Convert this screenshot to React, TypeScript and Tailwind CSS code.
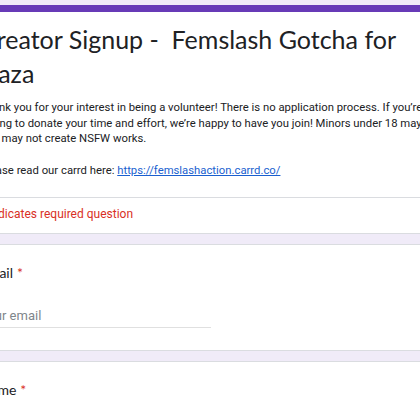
import React from "react";

const Required = () => <span className="ml-1 text-[#d93025]">*</span>;

const QuestionCard = ({ title, placeholder }: { title: string; placeholder?: string }) => (
  <div className="border border-[#dadce0] bg-white px-[24px] pt-[18px] pb-[22px]">
    <div className="font-['Lato',sans-serif] text-[14px] leading-[20px] text-[#202124]">
      {title}
      <Required />
    </div>
    {placeholder && (
      <div className="mt-[23px] w-[231px] border-b border-[#e0e0e0] pb-[1px] font-['Roboto',sans-serif] text-[13px] leading-[20px] text-[#80868b]">
        {placeholder}
      </div>
    )}
  </div>
);

export default function App() {
  return (
    <div className="h-[420px] w-[420px] overflow-hidden bg-[#f0ebf8] pt-[5px]">
      <div className="-ml-[45px] flex w-[540px] flex-col gap-[10px]">
        <div className="border-x border-b border-[#dadce0] bg-white">
          <div className="h-[7px] bg-[#673ab7]" />
          <div className="px-[24px] pt-[10px] pb-[18px]">
            <h1 className="whitespace-pre font-['Lato',sans-serif] text-[25px] leading-[34px] text-[#202124]">
              {"Creator Signup -  Femslash Gotcha for"}
              <br />
              Gaza
            </h1>
            <div className="mt-[10px] whitespace-nowrap font-['Roboto',sans-serif] text-[11.3px] leading-[15.7px] text-[#202124]">
              <p>
                Thank you for your interest in being a volunteer! There is no application process. If you’re
                <br />
                willing to donate your time and effort, we’re happy to have you join! Minors under 18 may
                <br />
                and may not create NSFW works.
              </p>
              <p className="mt-[15.7px]">
                Please read our carrd here:{" "}
                <a href="#" className="text-[#1a5fcf] underline">
                  https://femslashaction.carrd.co/
                </a>
              </p>
            </div>
          </div>
          <div className="border-t border-[#dadce0] px-[24px] pt-[9px] pb-[11px] font-['Roboto',sans-serif] text-[12px] leading-[15px] text-[#d93025]">
            * Indicates required question
          </div>
        </div>
        <QuestionCard title="Email" placeholder="Your email" />
        <QuestionCard title="Name" placeholder="Your answer" />
      </div>
    </div>
  );
}
